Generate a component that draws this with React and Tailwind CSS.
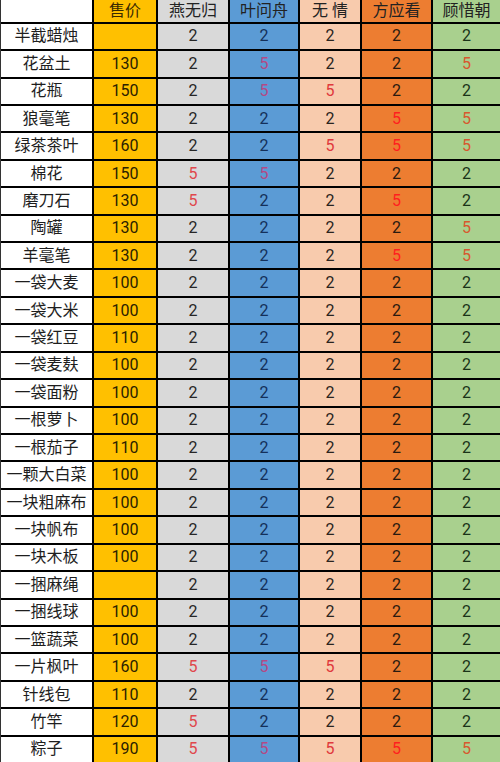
import React from "react";

const rows = [
  ["半截蜡烛", "", 2, 2, 2, 2, 2],
  ["花盆土", "130", 2, 5, 2, 2, 5],
  ["花瓶", "150", 2, 5, 5, 2, 2],
  ["狼毫笔", "130", 2, 2, 2, 5, 5],
  ["绿茶茶叶", "160", 2, 2, 5, 5, 5],
  ["棉花", "150", 5, 5, 2, 2, 2],
  ["磨刀石", "130", 5, 2, 2, 5, 2],
  ["陶罐", "130", 2, 2, 2, 2, 5],
  ["羊毫笔", "130", 2, 2, 2, 5, 5],
  ["一袋大麦", "100", 2, 2, 2, 2, 2],
  ["一袋大米", "100", 2, 2, 2, 2, 2],
  ["一袋红豆", "110", 2, 2, 2, 2, 2],
  ["一袋麦麸", "100", 2, 2, 2, 2, 2],
  ["一袋面粉", "100", 2, 2, 2, 2, 2],
  ["一根萝卜", "100", 2, 2, 2, 2, 2],
  ["一根茄子", "110", 2, 2, 2, 2, 2],
  ["一颗大白菜", "100", 2, 2, 2, 2, 2],
  ["一块粗麻布", "100", 2, 2, 2, 2, 2],
  ["一块帆布", "100", 2, 2, 2, 2, 2],
  ["一块木板", "100", 2, 2, 2, 2, 2],
  ["一捆麻绳", "", 2, 2, 2, 2, 2],
  ["一捆线球", "100", 2, 2, 2, 2, 2],
  ["一篮蔬菜", "100", 2, 2, 2, 2, 2],
  ["一片枫叶", "160", 5, 5, 5, 2, 2],
  ["针线包", "110", 2, 2, 2, 2, 2],
  ["竹竿", "120", 5, 2, 2, 2, 2],
  ["粽子", "190", 5, 5, 5, 5, 5],
];

const cols = [
  { bg: "bg-[#d9d9d9]", two: "text-[#262626]", five: "text-[#e0474c]" },
  { bg: "bg-[#5b9bd5]", two: "text-[#14305a]", five: "text-[#b34a86]" },
  { bg: "bg-[#f8cbad]", two: "text-[#2a2420]", five: "text-[#e0393c]" },
  { bg: "bg-[#ed7d31]", two: "text-[#2a1a10]", five: "text-[#ff1f1f]" },
  { bg: "bg-[#a9d08e]", two: "text-[#1a3318]", five: "text-[#d8582e]" },
];

const headers = ["燕无归", "叶问舟", "无 情", "方应看", "顾惜朝"];

const cell = "flex items-center justify-center text-[16px] leading-none";

export default function App() {
  return (
    <div
      className="w-[500px] h-[762px] overflow-hidden bg-black border-l border-[#333]"
      style={{ fontFamily: 'Roboto, "Noto Sans CJK SC", sans-serif' }}
    >
      <div className="grid grid-cols-[91px_62px_70px_68px_60px_69px_67px] grid-rows-[21.7px_repeat(27,25.43px)] gap-[2px]">
        <div className={`${cell} bg-white`}></div>
        <div className={`${cell} bg-[#ffc000] text-[#3a2a00]`}>售价</div>
        {headers.map((h, i) => (
          <div key={h} className={`${cell} ${cols[i].bg} text-[#222]`}>
            {h}
          </div>
        ))}
        {rows.map((r) => (
          <React.Fragment key={r[0]}>
            <div className={`${cell} bg-white text-[#1e1e1e]`}>{r[0]}</div>
            <div className={`${cell} bg-[#ffc000] text-[#2b2000]`}>{r[1]}</div>
            {r.slice(2).map((v, i) => (
              <div
                key={i}
                className={`${cell} ${cols[i].bg} ${v === 5 ? cols[i].five : cols[i].two}`}
              >
                {v}
              </div>
            ))}
          </React.Fragment>
        ))}
      </div>
    </div>
  );
}
